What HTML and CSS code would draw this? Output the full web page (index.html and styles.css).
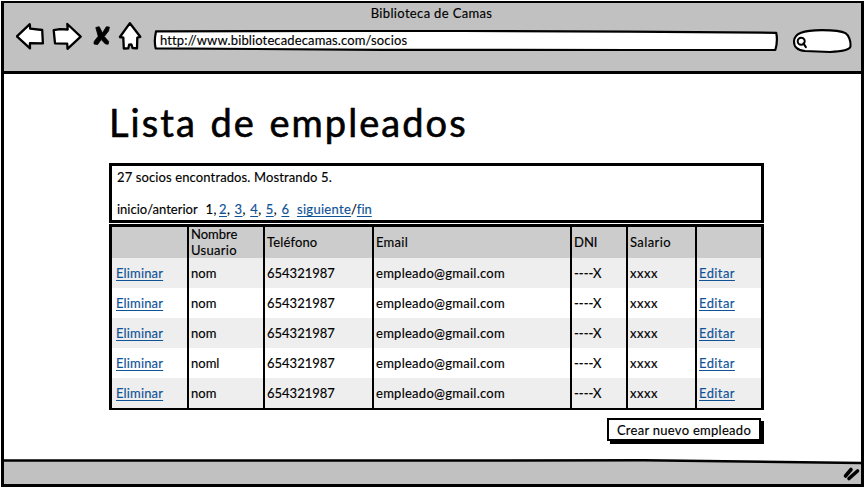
FILE: index.html
```
<!DOCTYPE html>
<html lang="es">
<head>
<meta charset="utf-8">
<title>Biblioteca de Camas</title>
<link rel="stylesheet" href="styles.css">
</head>
<body>
<div class="window">
  <header class="chrome">
    <div class="window-title">Biblioteca de Camas</div>
    <div class="toolbar">
      <svg class="nav" width="136" height="32" viewBox="0 0 136 32" aria-hidden="true">
        <g fill="#fff" stroke="#000" stroke-width="2.3" stroke-linejoin="round">
          <path d="M.9 15.400 13.800 3.200l.4 4.400 12 1.400.7 13.400-13-.2.100 5.200Z"/>
          <path d="M37.700 9.200 44 8.200l7.700.3-.4-5.500L64.700 15.600 51.500 27.800l-.300-5.200-12.200-.2Z"/>
          <path d="M113.900 2.200 103.900 16l3.400.6.500 10.900 4.600-.2.700-3.700 2.200-.2 1.300 3.600 4.400.4.300-10.800 3-.8Z"/>
        </g>
        <g fill="#000" stroke="#000" stroke-linejoin="round">
          <path d="m79.800 6.500 3.400-.8 3.300 6.300 3.800-6.200 3.100.3-.8 3.800-4.300 5.600 4.400 5-.5 2.700-2.800-.3-4.200-4.300-3.600 5-3.600-.6.200-2.600 4-5.200Z" stroke-width=".8"/>
        </g>
      </svg>
      <div class="address">
        <svg class="outline" width="626" height="24" viewBox="0 0 626 24" aria-hidden="true"><path d="M3 2.400 180 2h130l165 .6 148.200 1.200q1.800 8-.9 17.200L480 21l-250-.2L2.700 19.400Q.8 12 3 2.400Z" fill="#fff" stroke="#000" stroke-width="2.200" stroke-linejoin="round"/></svg>
        <span class="url">http://www.bibliotecadecamas.com/socios</span>
      </div>
      <svg class="search" width="60" height="26" viewBox="0 0 60 26" aria-hidden="true">
        <path d="M2 13C2.500 5 11 2.400 30 2.100c7 0 19 .6 23.500 3.100 3.500 2.300 5.500 8.500 5 13-.3 3.500-7 5.300-20.500 5.800L13 23C5 22.500 1.700 18 2 13Z" fill="#fff" stroke="#000" stroke-width="2.100"/>
        <circle cx="9.200" cy="13.200" r="3.500" fill="none" stroke="#000" stroke-width="2"/>
        <path d="m11.500 15.500 2.300 3.500" stroke="#000" stroke-width="2.200" stroke-linecap="round"/>
      </svg>
    </div>
  </header>
  <main class="page">
    <h1>Lista de empleados</h1>
    <section class="summary">
      <p class="count">27 socios encontrados. Mostrando 5.</p>
      <nav class="pager">
        <span class="prev">inicio/anterior</span>
        <span class="num">1,</span><span class="num"><a>2</a>,</span><span class="num"><a>3</a>,</span><span class="num"><a>4</a>,</span><span class="num"><a>5</a>,</span><span class="num"><a>6</a></span>
        <span><a class="next">siguiente</a>/<a>fin</a></span>
      </nav>
    </section>
    <div class="table">
      <div class="row head"><div></div><div><span class="l1">Nombre</span><br><span class="user">Usuario</span></div><div class="tel">Teléfono</div><div class="em">Email</div><div>DNI</div><div class="sal">Salario</div><div></div></div>
      <div class="row odd"><div><a class="del">Eliminar</a></div><div>nom</div><div>654321987</div><div class="mail">empleado@gmail.com</div><div>----X</div><div class="pay">xxxx</div><div><a class="edit">Editar</a></div></div>
      <div class="row"><div><a class="del">Eliminar</a></div><div>nom</div><div>654321987</div><div class="mail">empleado@gmail.com</div><div>----X</div><div class="pay">xxxx</div><div><a class="edit">Editar</a></div></div>
      <div class="row odd"><div><a class="del">Eliminar</a></div><div>nom</div><div>654321987</div><div class="mail">empleado@gmail.com</div><div>----X</div><div class="pay">xxxx</div><div><a class="edit">Editar</a></div></div>
      <div class="row"><div><a class="del">Eliminar</a></div><div>noml</div><div>654321987</div><div class="mail">empleado@gmail.com</div><div>----X</div><div class="pay">xxxx</div><div><a class="edit">Editar</a></div></div>
      <div class="row odd"><div><a class="del">Eliminar</a></div><div>nom</div><div>654321987</div><div class="mail">empleado@gmail.com</div><div>----X</div><div class="pay">xxxx</div><div><a class="edit">Editar</a></div></div>
    </div>
    <button class="create">Crear nuevo empleado</button>
  </main>
  <footer class="status">
    <svg width="857" height="25" viewBox="0 0 857 25" aria-hidden="true">
      <path d="M0 1.400 640 1.300l217 2.700V25H0Z" fill="#c1c1c1"/>
      <path d="M0 1.500 200 1.600 640 1.300l217 2.700" fill="none" stroke="#000" stroke-width="2.500"/>
      <path d="m841.500 17 5.500-6.500M845 19.500l8.500-7.500" stroke="#000" stroke-width="3.600" stroke-linecap="round"/>
    </svg>
  </footer>
</div>
</body>
</html>
```

FILE: styles.css
```
* { box-sizing: border-box; }
body {
  margin: 0;
  background: #fff;
  color: #000;
  font: 13px/16px Lato, "Liberation Sans", sans-serif;
  font-variant-ligatures: none;
  -webkit-text-stroke: 0.15px currentColor;
}
.window {
  display: flex;
  flex-direction: column;
  width: 864px;
  height: 487px;
  padding-left: 1px;
  padding-top: 1px;
}
.window > * { border: solid #000; border-width: 0 3px; }
.chrome {
  height: 73px;
  background: #c1c1c1;
  border-width: 2px 3px 3px !important;
}
.window-title {
  height: 20px;
  padding-right: 2px;
  line-height: 21px;
  text-align: center;
  letter-spacing: 0.35px;
}
.toolbar { display: flex; padding-left: 12px; }
.nav { margin-top: -2px; }
.address { position: relative; width: 626px; height: 24px; margin: 6px 0 0 1px; }
.outline { position: absolute; left: 0; top: 0; }
.url { position: relative; display: block; padding-left: 7px; line-height: 22px; letter-spacing: 0.13px; }
.search { margin: 5px 0 0 13px; }
.page { flex: 1; padding: 27px 98px 0 105px; }
h1 {
  margin: 0;
  height: 62px;
  font-size: 38px;
  line-height: 43px;
  font-weight: 400;
  letter-spacing: 2.05px;
  word-spacing: 1.8px;
  -webkit-text-stroke: 0.6px #000;
  white-space: nowrap;
}
.summary {
  width: 655px;
  height: 60px;
  padding: 3px 5px;
  border: 3px solid #000;
}
.count { margin: 0 0 16px; letter-spacing: 0.12px; }
.pager { display: flex; }
.prev { width: 88.500px; }
.num { width: 15.600px; letter-spacing: 0.4px; }
.num:nth-child(2) { width: 13.500px; }
.next { letter-spacing: 0.3px; }
a {
  color: #0f5296;
  text-decoration: underline;
  text-decoration-thickness: 1px;
  text-underline-offset: 2px;
  text-decoration-skip-ink: none;
}
.table { width: 655px; height: 186px; margin-top: 1px; border: 3px solid #000; }
.row {
  display: grid;
  grid-template-columns: 75px 76px 109px 198px 56px 69px 66px;
  height: 30px;
  line-height: 30px;
}
.row > div { padding-left: 2px; border-left: 2px solid #000; }
.row > div:first-child { padding-left: 4px; border-left: 0; }
.odd { background: #eee; }
.head { height: 31px; background: #ccc; line-height: 31px; }
.head > div:nth-child(2) { margin-top: -1px; line-height: 16px; }
.user { letter-spacing: 0.3px; }
.tel, .del { letter-spacing: 0.15px; }
.em, .mail { letter-spacing: 0.27px; }
.sal, .edit { letter-spacing: 0.4px; }
.pay { letter-spacing: 0.5px; }
.create {
  display: block;
  width: 154px;
  height: 23px;
  margin: 8px 0 0 498px;
  padding: 0;
  border: 2px solid #000;
  box-shadow: 3px 3px 0 #000;
  background: #fff;
  color: #000;
  font: inherit;
  letter-spacing: 0.28px;
}
.status { height: 28px; border-width: 0 3px 3px !important; }
.status svg { display: block; }
```
